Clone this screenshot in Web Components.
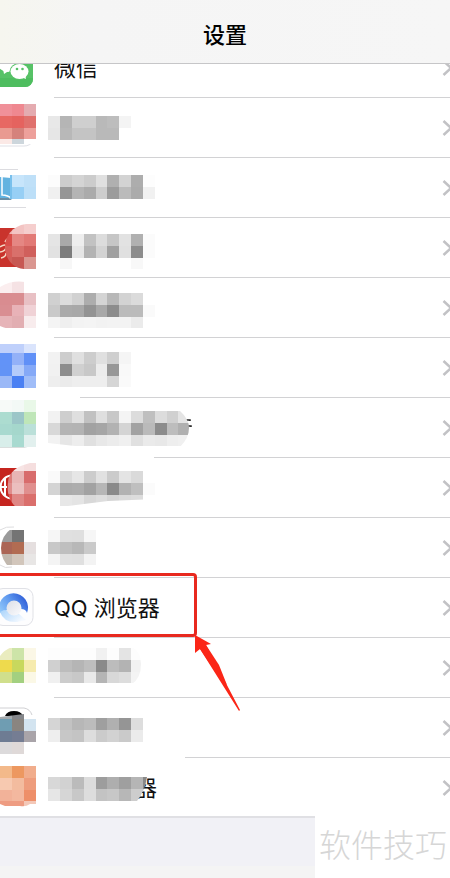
<!DOCTYPE html>
<html lang="zh-CN">
<head>
<meta charset="UTF-8">
<meta name="viewport" content="width=device-width, initial-scale=1">
<title>设置</title>
<style>
  :root {
    --separator: #d2d2d4;
    --mark: #e8291f;
    --group-bg: #f1f1f6;
  }
  body {
    margin: 0;
    background: #fff;
    color: #111;
    font-family: Inter, "Noto Sans CJK SC", sans-serif;
    font-size: 22px;
    overflow-x: hidden;
  }
</style>
</head>
<body>
<settings-page>
  <nav-header slot="header">设置</nav-header>

  <settings-row>
    <svg slot="icon" width="36" height="60" viewBox="0 0 36 60">
      <rect x="-4" y="11" width="37" height="38" rx="8" fill="#57c267"/>
      <path d="M-4 40h37v1a8 8 0 0 1-8 8H-4z" fill="#4ebd5f"/>
      <ellipse cx="8" cy="24" rx="11" ry="10" fill="#fff"/>
      <path d="M3 31l1 5 6-4z" fill="#fff"/>
      <ellipse cx="19.500" cy="33.500" rx="10" ry="8.500" fill="#57c267"/>
      <ellipse cx="19.500" cy="33.500" rx="9" ry="7.500" fill="#fff"/>
      <path d="M21 39l5 2-1-5z" fill="#fff"/>
      <circle cx="17" cy="31" r="1.300" fill="#57c267"/>
      <circle cx="22.500" cy="31" r="1.300" fill="#57c267"/>
    </svg>
    微信
  </settings-row>

  <settings-row>
    <svg slot="icon" width="36" height="60" viewBox="0 0 36 60"><path d="M0 48h24q6 0 9-5" fill="none" stroke="#dfe0e6"/></svg>
    <mosaic-block slot="icon" top="6" style="--shape: inset(0 0 14px 0)"
      cells="f09099 ef8890 e4abb0/e76863 e5635f e0716d/e99a91 d5827c eda09b/fbe9e6 cdd6dc ffffff"></mosaic-block>
    <mosaic-block top="18" cells="e8 b5 cf cf b9 bd f4/e6 b8 c4 c4 b9 b9 ff"></mosaic-block>
  </settings-row>

  <settings-row>
    <svg slot="icon" width="36" height="60" viewBox="0 0 36 60">
      <path d="M0 11.500h18M0 49.500h26" stroke="#dcdce0"/>
      <path d="M0 19l11 1v20H0z" fill="#63b3e0"/>
      <path d="M2 19v18q6 0 10 4" fill="none" stroke="#fff" stroke-width="1.500"/>
      <path d="M0 40h9l3 2H0z" fill="#6a8ea4"/>
    </svg>
    <mosaic-block slot="icon" top="17" style="--shape: inset(0 0 0 10px)"
      cells="79c0ec c7e5fb bfe0f8/79c0ec 97cff5 bcdff8"></mosaic-block>
    <mosaic-block top="17" cells="fc cc d4 cc e0 b0 d3 ad fd/f0 96 b4 ab cd 9c bb ab f1"></mosaic-block>
  </settings-row>

  <settings-row>
    <svg slot="icon" width="36" height="60" viewBox="0 0 36 60">
      <rect x="-8" y="10" width="40" height="39" rx="8" fill="#c9332c"/>
      <path d="M0 29q6-4 6 0t-6 5M1 40q5-1 5-5M5 24l2-3" fill="none" stroke="#f3d9c6" stroke-width="1.500"/>
    </svg>
    <mosaic-block slot="icon" top="4" style="--shape: path('M37 6H26C12 8 5 18 5 29C5 40 12 50 24 51H37z')"
      cells="f0b5b3 f3c4c3 f5cecd/d94f4a e58783 e27a76/d75d58 d9706b d0605c/cf5f5a c75853 da9690"></mosaic-block>
    <mosaic-block top="16" cells="e5 a9 ee c2 dc c6 e2 b0 fb/e2 7c e6 b3 d3 a0 e0 8c fb/ff f7 ff ff ff ff ff f8"></mosaic-block>
  </settings-row>

  <settings-row>
    <mosaic-block slot="icon" top="3" style="--shape: path('M0 9Q12 2 25 4H37V51H14Q6 51 0 48z')"
      cells="fbeeef f5e2e4 ffffff/d98c90 d98d90 e8c0c4/d98e92 e8b2b7 f0d2d6/e6b4b8 e2aeb2 f8eced"></mosaic-block>
    <mosaic-block top="15" cells="d0 dc d1 ad d4 b8 d3 db ff/c9 aa a8 93 a8 8c bb bb fa/f4 ef f3 f4 f2 f3 f3 eb ff"></mosaic-block>
  </settings-row>

  <settings-row style="--divider-start: 80px">
    <mosaic-block slot="icon" top="3" style="--shape: inset(6px 0 0 0)"
      cells="bfd0fb bfd0fb dae4fc/6293f7 93b1f8 6090f7/6293f6 b4cbfa 85a9f7/9ab8f7 4a80f3 a0bdf8"></mosaic-block>
    <mosaic-block top="14" cells="f2 cd e0 cd e0 cf f5/f1 8d d0 c8 ec 97 f9/ee eb ee ee ee d5 fa"></mosaic-block>
  </settings-row>

  <settings-row style="--divider-start: 154px">
    <svg slot="icon" width="36" height="60" viewBox="0 0 36 60"><path d="M0 49.500h24q5 0 8-5" fill="none" stroke="#d9dedd"/></svg>
    <mosaic-block slot="icon" top="2"
      cells="f7faf8 f3f9f6 e9f8e8/acdcd0 9cc6c8 bfe6b8/a8d9cf a5d7cc bbe0d9/d8eeea a8dad0 e2f0ee"></mosaic-block>
    <mosaic-block top="13" style="--shape: path('M0 13H132Q141 21 141 30Q141 40 132 49H36L0 45z')"
      cells="f2 ce df c1 df c8 f4 dc bf dc d0 e4/d8 b4 b3 a2 a6 b2 d4 a2 ba 8c bd b0/f2 e6 ed e0 e8 ec f0 e0 ea e8 ee f0">
      <svg slot="under" width="144" height="60" viewBox="0 0 144 60"><path d="M137 22h5v1M139 28h4v1" fill="none" stroke="#222" stroke-width="1.500"/></svg>
    </mosaic-block>
  </settings-row>

  <settings-row>
    <svg slot="icon" width="36" height="60" viewBox="0 0 36 60">
      <rect x="-8" y="10" width="40" height="38" rx="8" fill="#c5251f"/>
      <circle cx="12" cy="29" r="11.500" fill="none" stroke="#fff" stroke-width="2"/>
      <path d="M5 20v18M1 29h6" stroke="#fff" stroke-width="2"/>
    </svg>
    <mosaic-block slot="icon" top="1" style="--shape: path('M37 5H30Q9 10 8 24Q6 41 16 49H37z')"
      cells="f0c9c9 f7e4e4 f5dede/dc7e7c e8b5b5 d86c6c/df8d8c ebbebe e08f8e/d65a57 df8785 da6f6c"></mosaic-block>
    <mosaic-block top="13" style="--shape: path('M0 13H108V41L60 43L12 49V37H0z')"
      cells="fa db e6 cc e1 cb e4 da ff/d4 ab ad a2 b6 8a b2 bf fb/ff e7 e4 d8 dd d5 da dc ff"></mosaic-block>
  </settings-row>

  <settings-row>
    <svg slot="icon" width="36" height="60" viewBox="0 0 36 60"><path d="M0 12q6-4 14-3M0 47q5 4 12 2" fill="none" stroke="#dedee0"/></svg>
    <mosaic-block slot="icon" top="12" style="--shape: path('M12 10H37V50H10Q1 42 1 30Q1 18 12 10z')"
      cells="9a9a9a 747474 ffffff/ab6555 b26c52 e5dfdf/c1b8ae d2c6bb e8e6e5"></mosaic-block>
    <mosaic-block top="12" cells="f6 e0 df f6/c8 bf b8 ca/f4 e1 e0 f3"></mosaic-block>
  </settings-row>

  <settings-row>
    <svg slot="icon" width="36" height="60" viewBox="0 0 36 60">
      <defs>
        <linearGradient id="ring" x1="0" y1="0.800" x2="1" y2="0.300">
          <stop offset="0" stop-color="#8fc6fa"/>
          <stop offset="0.500" stop-color="#5d97ee"/>
          <stop offset="1" stop-color="#2b59d6"/>
        </linearGradient>
        <linearGradient id="tail" x1="0" y1="0" x2="1" y2="0.500">
          <stop offset="0" stop-color="#a8d3fb"/>
          <stop offset="1" stop-color="#f4f9ff"/>
        </linearGradient>
        <linearGradient id="cloud" x1="0" y1="0" x2="1" y2="1">
          <stop offset="0" stop-color="#dcdfe7"/>
          <stop offset="1" stop-color="#fbfbfd"/>
        </linearGradient>
      </defs>
      <rect x="-5" y="10.500" width="38" height="37" rx="8" fill="#fdfdfe" stroke="#e0e1e6"/>
      <path d="M0 35a14.500 14.500 0 1 1 27 0q-1-4-6-4l-7-2-9 4z" fill="url(#ring)"/>
      <path d="M0 34Q4 45 17 44L26 42 18 35 4 32z" fill="url(#tail)"/>
      <circle cx="14" cy="30" r="7.500" fill="url(#cloud)"/>
    </svg>
    QQ 浏览器
    <callout-mark slot="mark"></callout-mark>
  </settings-row>

  <settings-row>
    <mosaic-block slot="icon" top="10" style="--shape: path('M12 9H37V46H0V18Q4 12 12 9z')"
      cells="eaecbf cde4a8 fbf7e6/eeda4d c8d85d f6ebae/d0df8c a3d080 fbf8e6"></mosaic-block>
    <mosaic-block top="10" style="--shape: path('M0 9H84Q93 14 93 26Q93 40 84 46H0z')"
      cells="fd fd fd fd f1 fd e4 fd/d0 bc b5 be 8a bc b3 f2/f0 cc c8 e9 b5 d8 dd f4"></mosaic-block>
  </settings-row>

  <settings-row style="--divider-start: 185px">
    <svg slot="icon" width="36" height="60" viewBox="0 0 36 60">
      <path d="M0 10h24q6 1 8 7" fill="none" stroke="#d0d0d3"/>
      <path d="M5 18Q7 13 14 13T23 18z" fill="#000"/>
    </svg>
    <mosaic-block slot="icon" top="9" style="--shape: path('M0 19L24 16V21H37V45H25V56H0z')"
      cells="a3a8ab 84868a ffffff/6f9db2 8a8580 d3e4f0/6e7c93 757d93 a9a4a9/dcdadb dfd9d8 ffffff"></mosaic-block>
    <mosaic-block top="20" cells="d5 c2 b7 bc 9f b0 95 dd/ee c7 c4 dd cb d2 ca eb"></mosaic-block>
  </settings-row>

  <settings-row style="--divider-start: 0px">
    <mosaic-block slot="icon" top="8" style="--shape: path('M0 8H37V46H30Q26 49 20 48H5L0 46z')"
      cells="f3b98a ed9860 f1ad8c/f7c9b0 f3bc9f ee9d7d/f2b299 f3b89f ee8f69/ee9c82 ee9c82 f3c8b8"></mosaic-block>
    <mosaic-block top="19" style="--shape: path('M0 19H99Q97 33 89 43H0z')"
      cells="d8 d2 bb dc 9d ae 9f b5 88/e6 d6 c8 dd c3 c7 b7 cd cd">
      <span slot="under">器</span>
    </mosaic-block>
  </settings-row>

  <water-mark slot="footer">软件技巧</water-mark>
</settings-page>

<script>
  function attach(el, html) {
    el.attachShadow({ mode: 'open' }).innerHTML = html;
  }

  // Page frame: header over a scrolled list, grey group gap below
  class SettingsPage extends HTMLElement {
    constructor() {
      super();
      attach(this, `
        <style>
          :host { display: block; }
          header { position: relative; z-index: 2; }
          /* the first row is scrolled half under the header */
          main { margin-top: -26px; }
          footer {
            display: flex;
            justify-content: flex-end;
            height: 62px;
            margin-top: -2px;
            position: relative;
            background:
              linear-gradient(#e0e0e4, #e0e0e4) 0 0 / 100% 2px no-repeat,
              linear-gradient(var(--group-bg) 80%, #f4f4f4 80%);
          }
        </style>
        <header><slot name="header"></slot></header>
        <main><slot></slot></main>
        <footer><slot name="footer"></slot></footer>
      `);
    }
  }

  class NavHeader extends HTMLElement {
    constructor() {
      super();
      attach(this, `
        <style>
          :host {
            display: block;
            background: linear-gradient(90deg, #f6f6ef, #f5f5f5 20%, #f6f6f6);
            border-bottom: 1px solid #c6c6c8;
          }
          h1 {
            margin: 0;
            padding: 19px 0 12px;
            font-size: 22px;
            font-weight: 500;
            line-height: 32px;
            text-align: center;
            color: #000;
          }
        </style>
        <h1><slot></slot></h1>
      `);
    }
  }

  class SettingsRow extends HTMLElement {
    constructor() {
      super();
      attach(this, `
        <style>
          :host { display: block; position: relative; }
          .row {
            display: flex;
            align-items: center;
            height: 60px;
            background: linear-gradient(var(--separator), var(--separator))
              var(--divider-start, 54px) 100% / 100% 1px no-repeat;
          }
          .icon { display: grid; flex: 0 0 48px; height: 60px; }
          ::slotted([slot="icon"]) { grid-area: 1 / 1; }
          .name { flex: 1; padding-left: 6px; line-height: 32px; white-space: nowrap; }
          ::slotted(mosaic-block:not([slot])) { margin-left: -6px; }
          .chevron { flex: 0 0 8px; }
        </style>
        <div class="row">
          <div class="icon"><slot name="icon"></slot></div>
          <div class="name"><slot></slot></div>
          <svg class="chevron" width="8" height="18" viewBox="0 0 8 18">
            <path d="M1.500 2l7.500 7-7.500 7" fill="none" stroke="#c2c2c5" stroke-width="2.500"/>
          </svg>
        </div>
        <slot name="mark"></slot>
      `);
    }
  }

  // Pixelated patch. cells: rows split by "/", each cell a grey (2 digits) or rgb (6 digits)
  class MosaicBlock extends HTMLElement {
    constructor() {
      super();
      attach(this, `
        <style>
          :host { display: grid; height: 60px; justify-content: start; }
          .mosaic, ::slotted([slot="under"]) { grid-area: 1 / 1; }
          .mosaic { clip-path: var(--shape, none); z-index: 1; }
          ::slotted(span) { justify-self: end; align-self: center; line-height: 32px; }
        </style>
        <slot name="under"></slot>
        <svg class="mosaic" height="60" shape-rendering="crispEdges"></svg>
      `);
    }

    connectedCallback() {
      const size = 11.83;
      const top = Number(this.getAttribute('top'));
      const rows = this.getAttribute('cells').split('/').map((r) => r.split(' '));
      const svg = this.shadowRoot.querySelector('.mosaic');
      svg.setAttribute('width', Math.ceil(rows[0].length * size) + 2);
      svg.innerHTML = rows.map((row, y) => row.map((c, x) => {
        const fill = c.length === 2 ? c + c + c : c;
        return `<rect x="${0.3 + x * size}" y="${top + y * size}" width="${size}" height="${size}" fill="#${fill}"/>`;
      }).join('')).join('');
    }
  }

  // Red frame round the row with an arrow pointing at its corner
  class CalloutMark extends HTMLElement {
    constructor() {
      super();
      attach(this, `
        <style>
          :host {
            position: absolute;
            z-index: 1;
            top: -5px;
            left: -4px;
            width: 201px;
            height: 64px;
            box-sizing: border-box;
            border: 3px solid var(--mark);
            border-radius: 4px;
          }
          svg { position: absolute; top: 100%; left: 100%; }
        </style>
        <svg width="48" height="78" viewBox="0 0 48 78">
          <path d="M1 1l16 9-5 1 34 65-1 1L6 15l-5 4z" fill="#fb2617"/>
          <path d="M12 11l13 20 8 20-6-5L6 15z" fill="#fb2617"/>
        </svg>
      `);
    }
  }

  class WaterMark extends HTMLElement {
    constructor() {
      super();
      attach(this, `
        <style>
          :host {
            display: block;
            padding: 0 3px 0 4px;
            background: #fff;
            color: #d6d6d6;
            font-family: "Noto Sans CJK SC", sans-serif;
            font-size: 32px;
            font-weight: 300;
            line-height: 54px;
          }
        </style>
        <slot></slot>
      `);
    }
  }

  customElements.define('settings-page', SettingsPage);
  customElements.define('nav-header', NavHeader);
  customElements.define('settings-row', SettingsRow);
  customElements.define('mosaic-block', MosaicBlock);
  customElements.define('callout-mark', CalloutMark);
  customElements.define('water-mark', WaterMark);
</script>
</body>
</html>
